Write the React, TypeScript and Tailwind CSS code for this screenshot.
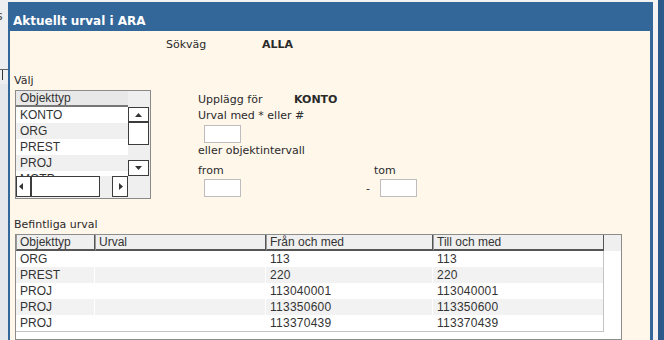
const LIST_ITEMS = ["KONTO", "ORG", "PREST", "PROJ", "MOTP"];

const COLUMNS = [
  { label: "Objekttyp", width: "w-[79px]" },
  { label: "Urval", width: "w-[171px]" },
  { label: "Från och med", width: "w-[167px]" },
  { label: "Till och med", width: "w-[171px]" },
];

const ROWS = [
  { typ: "ORG", urval: "", from: "113", tom: "113" },
  { typ: "PREST", urval: "", from: "220", tom: "220" },
  { typ: "PROJ", urval: "", from: "113040001", tom: "113040001" },
  { typ: "PROJ", urval: "", from: "113350600", tom: "113350600" },
  { typ: "PROJ", urval: "", from: "113370439", tom: "113370439" },
];

const body = "font-['DejaVu_Sans',sans-serif] text-[11px] leading-[13px] text-[#2a2a2a]";
const grid = "font-['Liberation_Sans',Arial,sans-serif] text-[12px] text-[#333]";

function Arrow({ dir }: { dir: "up" | "down" | "left" | "right" }) {
  const pts = {
    up: "0,4 3.5,0 7,4",
    down: "0,0 7,0 3.5,4",
    left: "4,0 4,7 0,3.5",
    right: "0,0 0,7 4,3.5",
  }[dir];
  const vertical = dir === "up" || dir === "down";
  return (
    <svg
      width={vertical ? 7 : 4}
      height={vertical ? 4 : 7}
      viewBox={vertical ? "0 0 7 4" : "0 0 4 7"}
    >
      <polygon points={pts} fill="#333" />
    </svg>
  );
}

function Field() {
  return <div className="w-[37px] h-[18px] border border-[#bdbdbd] bg-white" />;
}

function ListBox() {
  return (
    <div className="ml-[1px] mt-[3px] w-[136px] h-[109px] border border-[#8a8a8a] bg-[#efefef] flex">
      <div className="w-[112px] flex flex-col">
        <div className={`h-[16px] bg-[#e8e8e8] border-b-2 border-[#777] pl-[4px] leading-[14px] ${grid}`}>
          Objekttyp
        </div>
        <div className="h-[69px] overflow-hidden">
          {LIST_ITEMS.map((item, i) => (
            <div
              key={item}
              className={`h-[16px] pl-[4px] leading-[16px] ${grid} ${i % 2 ? "bg-[#f0f0f0]" : "bg-white"}`}
            >
              {item}
            </div>
          ))}
        </div>
        <div className="h-[21px] flex">
          <div className="w-[15px] border border-[#3c3c3c] bg-white flex items-center pl-[2px]">
            <Arrow dir="left" />
          </div>
          <div className="w-[69px] border border-[#3c3c3c] bg-white" />
          <div className="w-[12px]" />
          <div className="w-[16px] border border-[#3c3c3c] bg-white flex items-center justify-center pl-[2px]">
            <Arrow dir="right" />
          </div>
        </div>
      </div>
      <div className="w-[22px] flex flex-col">
        <div className="h-[16px]" />
        <div className="w-[21px] h-[15px] border border-[#3c3c3c] bg-white flex items-center justify-center">
          <Arrow dir="up" />
        </div>
        <div className="w-[21px] h-[23px] border border-[#3c3c3c] bg-white" />
        <div className="h-[15px]" />
        <div className="w-[21px] h-[16px] border border-[#3c3c3c] bg-white flex items-center justify-center">
          <Arrow dir="down" />
        </div>
      </div>
    </div>
  );
}

function UrvalTable() {
  return (
    <div className="ml-[5px] mt-[3px] w-[607px] h-[120px] border border-[#8c8c8c] bg-white flex flex-col">
      <div className="h-[16px] flex bg-[#efefef]">
        {COLUMNS.map((c) => (
          <div
            key={c.label}
            className={`${c.width} shrink-0 border-l border-l-[#9a9a9a] border-r border-r-[#555] border-b-2 border-b-[#555] pl-[3px] leading-[14px] text-[#222] ${grid}`}
          >
            {c.label}
          </div>
        ))}
        <div className="flex-1" />
      </div>
      <div className="w-[588px] border-r border-b border-[#c4c4c4]">
        {ROWS.map((r, i) => (
          <div
            key={r.from}
            className={`h-[16px] grid grid-cols-[79px_171px_167px_1fr] leading-[16px] ${grid} ${i % 2 ? "bg-[#f2f2f2]" : "bg-white"}`}
          >
            <div className="pl-[4px] border-r border-white">{r.typ}</div>
            <div className="pl-[4px] border-r border-white">{r.urval}</div>
            <div className="pl-[4px] border-r border-white tracking-[0.25px]">{r.from}</div>
            <div className="pl-[4px] tracking-[0.25px]">{r.tom}</div>
          </div>
        ))}
      </div>
    </div>
  );
}

export default function App() {
  return (
    <div className="w-[664px] h-[340px] overflow-hidden bg-[#f2f2f2] flex">
      {/* page behind the dialog */}
      <div className="w-[8px] shrink-0 overflow-hidden bg-[#eceef0] flex flex-col font-['DejaVu_Sans',sans-serif]">
        <span className="mt-[9px] -ml-[4px] text-[13px] leading-[14px] text-[#555]">s</span>
        <span className="mt-[8px] -ml-[5px] text-[12px] leading-[14px] text-[#b04040]">J</span>
        <div className="mt-[24px] h-[1px] bg-[#666]" />
        <div className="ml-[2px] w-[1px] h-[10px] bg-[#333]" />
        <div className="mt-[4px] flex-1 bg-[#e4e7eb]" />
      </div>

      {/* dialog */}
      <div className="w-[645px] shrink-0 mt-[2px] flex flex-col">
        <div className="h-[29px] bg-[#336699] pl-[5px] pt-[5px]">
          <span className="font-['DejaVu_Sans',sans-serif] font-bold text-[12px] leading-[14px] text-white">
            Aktuellt urval i ARA
          </span>
        </div>
        <div className="flex-1 overflow-hidden border-l-2 border-r-[3px] border-[#336699] bg-[#fff7ea] flex flex-col">
          <div className={`mt-[7px] ml-[156px] flex ${body}`}>
            <span className="w-[96px]">Sökväg</span>
            <span className="font-bold">ALLA</span>
          </div>

          <div className="mt-[23px] flex">
            <div className="ml-[4px] w-[184px] flex flex-col">
              <span className={body}>Välj</span>
              <ListBox />
            </div>
            <div className={`mt-[19px] flex flex-col ${body}`}>
              <div className="flex">
                <span className="w-[96px]">Upplägg för</span>
                <span className="font-bold">KONTO</span>
              </div>
              <span className="mt-[3px]">Urval med * eller #</span>
              <div className="mt-[3px] ml-[6px]">
                <Field />
              </div>
              <span className="mt-[1px]">eller objektintervall</span>
              <div className="mt-[7px] flex">
                <span className="w-[176px]">from</span>
                <span>tom</span>
              </div>
              <div className="mt-[2px] flex items-center">
                <div className="ml-[6px]">
                  <Field />
                </div>
                <span className="ml-[125px] w-[4px]">-</span>
                <div className="ml-[10px]">
                  <Field />
                </div>
              </div>
            </div>
          </div>

          <span className={`mt-[19px] ml-[4px] ${body}`}>Befintliga urval</span>
          <UrvalTable />
        </div>
      </div>

      <div className="w-[5px] shrink-0 bg-[#f2f2f2]" />
      <div className="w-[6px] shrink-0 bg-[#2c5b8b]" />
    </div>
  );
}
